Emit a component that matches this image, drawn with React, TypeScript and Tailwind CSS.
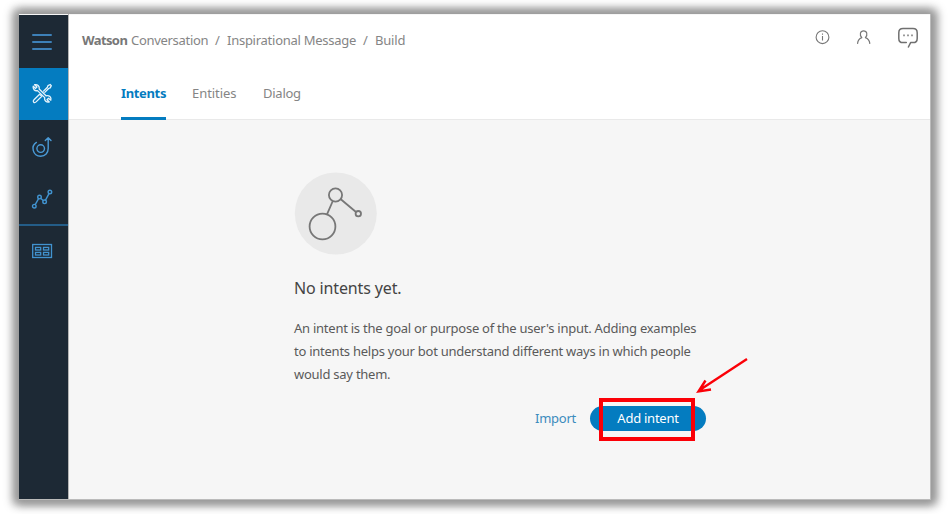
import React from "react";

const line = { fill: "none", strokeLinecap: "round", strokeLinejoin: "round" } as const;

function MenuIcon() {
  return (
    <svg width="22" height="20" viewBox="0 0 22 20" stroke="#3d80b8" strokeWidth="2" {...line}>
      <path d="M2 3h18M2 10h18M2 17h18" />
    </svg>
  );
}

function ToolsIcon() {
  return (
    <svg width="22" height="22" viewBox="0 0 22 22" stroke="#e6f3fb" strokeWidth="1.3" {...line}>
      <path d="M2.2 3.2L4.6 5.4L6 4L3.6 1.7C6.3 1 8.8 2.9 8.2 6L15 12.8C18.2 12 20.7 14.2 19.8 17.2L17.5 15.2L16 16.7L18.3 19C15.6 19.8 13 17.8 13.7 14.6L6.5 7.6C3.8 8.3 1.5 6 2.2 3.2Z" />
      <path d="M12.5 8.1L16.4 4.2L17 2.6L19.2 1.5L20.3 2.6L19.2 4.9L17.6 5.5L13.8 9.4M8.6 11.2L3 16.8C1.2 18.6 3.3 20.7 5.1 18.9L10.8 13.2Z" />
    </svg>
  );
}

function ImproveIcon() {
  return (
    <svg width="22" height="22" viewBox="0 0 22 22" stroke="#4a9ad6" strokeWidth="1.4" {...line}>
      <circle cx="9.7" cy="12.6" r="3.8" />
      <path d="M5.4 6.4C-.4 10 1.5 20.2 9.7 20.2C14.3 20.2 17.2 16.7 17.2 12.6V1.8M14.3 4.6L17.2 1.7L20 4.6" />
    </svg>
  );
}

function GraphIcon() {
  return (
    <svg width="22" height="22" viewBox="0 0 22 22" stroke="#4193d0" strokeWidth="1.4" {...line}>
      <circle cx="3.3" cy="18.2" r="1.8" />
      <circle cx="8.5" cy="9.1" r="1.8" />
      <circle cx="13.6" cy="13.8" r="1.8" />
      <circle cx="18.9" cy="4" r="1.8" />
      <path d="M4.2 16.6L7.6 10.7M9.9 10.4L12.2 12.5M14.5 12.2L18 5.6" />
    </svg>
  );
}

function GridIcon() {
  return (
    <svg width="22" height="16" viewBox="0 0 22 16" stroke="#4193d0" strokeWidth="1.3" fill="none">
      <rect x="1.7" y="1.5" width="18.8" height="13" />
      <rect x="4.5" y="4.4" width="5.2" height="2.6" />
      <rect x="12.5" y="4.4" width="5.2" height="2.6" />
      <rect x="4.5" y="9.4" width="5.2" height="2.6" />
      <rect x="12.5" y="9.4" width="5.2" height="2.6" />
    </svg>
  );
}

function Sidebar() {
  return (
    <nav className="flex w-[49px] shrink-0 flex-col bg-[#1d2935]">
      <div className="flex h-[53px] items-center justify-center pr-[3px] pt-px"><MenuIcon /></div>
      <div className="flex h-[52px] items-center justify-center bg-[#047cc0] pr-[3px]"><ToolsIcon /></div>
      <div className="flex h-[53px] items-center justify-center pr-[3px]"><ImproveIcon /></div>
      <div className="flex h-[53px] items-center justify-center border-b-2 border-[#245d88] pr-[3px]"><GraphIcon /></div>
      <div className="flex h-[50px] items-center justify-center pr-[3px]"><GridIcon /></div>
    </nav>
  );
}

function Header() {
  return (
    <header className="h-[105px] shrink-0 border-b border-[#e9e9e9] bg-white">
      <div className="flex h-[53px] justify-between pl-[13px] pr-[11px] text-[13px] leading-5 text-[#858585]">
        <div className="flex whitespace-pre pt-[15px]">
          <b className="w-[49px] font-bold tracking-[-0.6px] text-[#777]">Watson</b>
          <span className="w-[84px] tracking-[-0.3px]">Conversation</span>
          <span className="w-3">/</span>
          <span className="w-[136px] tracking-[-0.26px]">Inspirational Message</span>
          <span className="w-3">/</span>
          <span className="tracking-[-0.2px]">Build</span>
        </div>
        <div className="flex">
          <svg className="mr-[25px] mt-[14px]" width="16" height="16" viewBox="0 0 16 16" stroke="#777" strokeWidth="1.1" fill="none">
            <circle cx="8.5" cy="8.2" r="6.4" />
            <path d="M8.5 7v4.5M8.5 4.5v1.2" />
          </svg>
          <svg className="mr-[26px] mt-[14px] overflow-visible" width="16" height="16" viewBox="0 0 16 16" stroke="#777" strokeWidth="1.2" {...line}>
            <path d="M2.6 14.4C2.8 11.2 4.5 9.5 6.8 8.6C4.2 6 5.2 1.8 8.6 1.8S13 6 10.4 8.6C12.8 9.5 14.5 11.2 14.8 14.4" />
          </svg>
          <svg className="mt-[12px]" width="22" height="22" viewBox="0 0 22 22" stroke="#707070" strokeWidth="1.5" {...line}>
            <path d="M9.3 15.6H6Q1.8 15.6 1.8 11.4V5.8Q1.8 1.6 6 1.6H16Q20.2 1.6 20.2 5.8V11.4Q20.2 15.6 16 15.6H13.6L11.4 20" />
            <path d="M6.3 8.4h1.4M10.3 8.4h1.4M14.3 8.4h1.4" strokeWidth="1.7" strokeLinecap="butt" />
          </svg>
        </div>
      </div>
      <div className="flex h-[52px] whitespace-nowrap pl-[52px] text-[13px] leading-5 text-[#858585]">
        <div className="mr-[26px] w-[45px] border-b-[3px] border-[#047cc0] pt-[15px] font-bold tracking-[-0.35px] text-[#047cc0]">Intents</div>
        <div className="w-[71px] pt-[15px] tracking-[-0.05px]">Entities</div>
        <div className="pt-[15px] tracking-[-0.25px]">Dialog</div>
      </div>
    </header>
  );
}

function EmptyState() {
  return (
    <main className="flex-1 pl-[225px] pt-[52px] text-[13px] text-[#5a5a5a]">
      <svg width="84" height="84" viewBox="0 0 84 84" stroke="#777" strokeWidth="1.8" fill="none">
        <circle cx="41.8" cy="41.5" r="41" fill="#e9e9e9" stroke="none" />
        <circle cx="28.5" cy="54.5" r="12.9" />
        <circle cx="41.5" cy="23" r="6.6" />
        <circle cx="64.3" cy="41.7" r="2.7" />
        <path d="M38.8 29L33 42.4M46.8 27.2L62 40" />
      </svg>
      <h1 className="mt-[20px] whitespace-nowrap text-[16px] leading-6 tracking-[-0.14px] text-[#444]">No intents yet.</h1>
      <p className="mt-[17px] whitespace-nowrap leading-[23px] tracking-[-0.25px]">
        <span className="block">An intent is the goal or purpose of the user's input. Adding examples</span>
        <span className="block">to intents helps your bot understand different ways in which people</span>
        <span className="block">would say them.</span>
      </p>
      <div className="relative mt-[20px] flex h-[25px] w-[412px] items-center justify-end">
        <a className="mr-[14px] w-[41px] whitespace-nowrap tracking-[-0.25px] text-[#3b8bbd]">Import</a>
        <button className="h-[25px] w-[116px] rounded-full bg-[#047cc0] text-[13px] tracking-[-0.25px] text-white">Add intent</button>
        <svg className="absolute left-[299px] top-[-52px]" width="170" height="90" viewBox="0 0 170 90" fill="none" stroke="#fb0007">
          <rect x="8" y="46" width="92" height="39" strokeWidth="4" />
          <path d="M154 5L106 36.5M112.5 26.5L105.5 37.5L118 35.5" strokeWidth="2.4" />
        </svg>
      </div>
    </main>
  );
}

export default function App() {
  return (
    <div className="h-[514px] w-[949px] overflow-hidden bg-white pl-[19px] pt-[14px] font-['Noto_Sans',sans-serif]">
      <div className="w-[912px] shadow-[2px_0_9px_4px_#999,-2px_0_9px_4px_#999]">
        <div className="flex h-[486px] border-b border-r border-[#bbb] bg-[#f6f6f6] pt-px">
          <Sidebar />
          <div className="-mt-px flex min-w-0 flex-1 flex-col border-l border-[#b5b5b5] pt-px">
            <Header />
            <EmptyState />
          </div>
        </div>
      </div>
    </div>
  );
}
